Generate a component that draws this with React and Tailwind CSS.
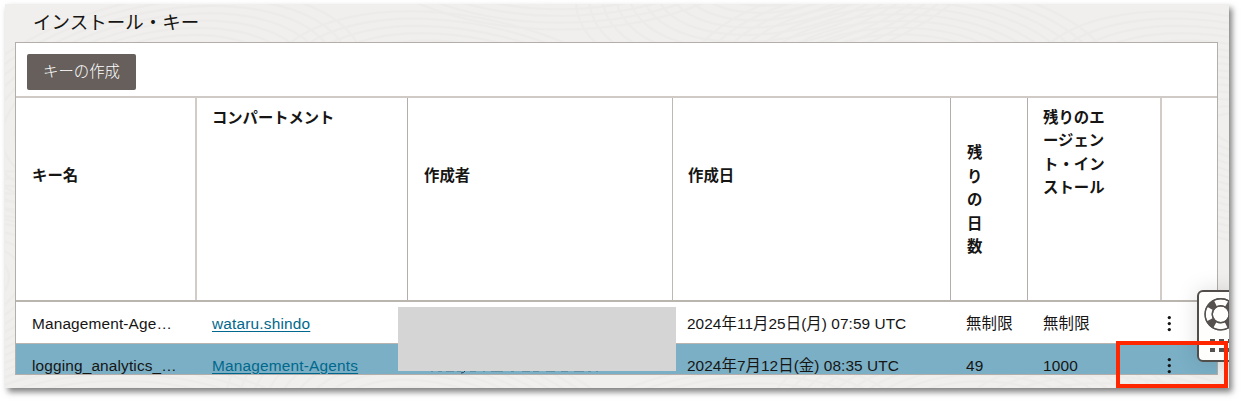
import React from "react";

const headers = [
  { text: "キー名", cell: "items-center pb-[55px] pl-[16px] border-r-2 border-[#d2cbc6]", box: "" },
  { text: "コンパートメント", cell: "items-start pl-[15px] border-r border-[#b3aeaa]", box: "text-[15.3px]" },
  { text: "作成者", cell: "items-center pb-[55px] pl-[16px] border-r border-[#beb8b4]", box: "" },
  { text: "作成日", cell: "items-center pb-[55px] pl-[15px] border-r border-[#b3aeaa]", box: "" },
  { text: "残りの日数", cell: "items-center pb-[7px] pl-[16px] border-r border-[#b3aeaa]", box: "w-[16px]" },
  { text: "残りのエージェント・インストール", cell: "items-start pl-[15px] border-r-2 border-[#d2cbc6]", box: "w-[63px] break-all" },
  { text: "", cell: "", box: "" },
];

const rows = [
  {
    name: "Management-Age…",
    compartment: "wataru.shindo",
    created: "2024年11月25日(月) 07:59 UTC",
    days: "無制限",
    installs: "無制限",
    style: "h-[42px] shrink-0 border-b border-[#b9b4b0] bg-white pt-[2px]",
  },
  {
    name: "logging_analytics_…",
    compartment: "Management-Agents",
    created: "2024年7月12日(金) 08:35 UTC",
    days: "49",
    installs: "1000",
    style: "h-[43px] shrink-0 bg-[#7aafc6]",
  },
];

const columns = "grid grid-cols-[181px_211px_265px_278px_77px_134px_55px]";

function Texture() {
  const rings = [];
  const centers = [
    [150, 110], [560, -80], [480, 130], [790, -40], [900, 90], [1240, 130],
    [-60, 290], [120, 470], [440, 440], [700, 480], [980, 430], [1160, 480],
  ];
  centers.forEach(([x, y], i) => {
    for (let r = 20; r < 150; r += 9) {
      rings.push(
        <ellipse key={`${i}-${r}`} cx={x} cy={y} rx={r * 1.5} ry={r * 0.75} transform={`rotate(${(i % 3) * 14 - 14} ${x} ${y})`} />
      );
    }
  });
  return (
    <svg className="absolute inset-0 h-full w-full" viewBox="5 4 1224 384" fill="none" stroke="#e7e6e4" strokeWidth="2.2" opacity="0.35">
      {rings}
    </svg>
  );
}

function Kebab() {
  return (
    <svg className="block h-[18px] w-[6px]" viewBox="0 0 6 18" fill="#161513">
      <circle cx="3.3" cy="2.6" r="1.65" />
      <circle cx="3.3" cy="8.6" r="1.65" />
      <circle cx="3.3" cy="14.6" r="1.65" />
    </svg>
  );
}

function HelpWidget() {
  return (
    <div className="absolute left-[1192px] top-[286px] h-[72px] w-[42px] rounded-[6px] border-2 border-[#504d4a] bg-[#fefefd] shadow-[0_0_22px_rgba(0,0,0,0.13)]">
      <svg className="block h-[68px] w-[38px]" viewBox="1199 292 38 68">
        <circle cx="1220.7" cy="314.3" r="12" fill="none" stroke="#55514e" strokeWidth="8.4" />
        <circle
          cx="1220.7"
          cy="314.3"
          r="12"
          fill="none"
          stroke="#fefefd"
          strokeWidth="6"
          strokeDasharray="11.6 7.25"
          transform="rotate(-27.7 1220.7 314.3)"
        />
        <circle cx="1220.7" cy="314.3" r="15.6" fill="none" stroke="#55514e" strokeWidth="1.4" />
        <circle cx="1220.7" cy="314.3" r="8.5" fill="none" stroke="#55514e" strokeWidth="1.4" />
        <path
          fill="#55514e"
          d="M1210 339h5v4h-5zM1219 339h5v4h-5zM1228 339h5v4h-5zM1210 348h5v4h-5zM1219 348h5v4h-5zM1228 348h5v4h-5z"
        />
      </svg>
    </div>
  );
}

export default function App() {
  return (
    <main className="h-[402px] w-[1242px] overflow-hidden bg-white pl-[5px] pt-[4px] font-['Liberation_Sans','Noto_Sans_CJK_JP',sans-serif] text-[15.4px] text-[#161513]" lang="ja">
      <div className="h-[384px] w-[1224px] shadow-[3px_4px_6px_0px_rgba(0,0,0,0.5)]">
        <section className="relative h-full w-full overflow-hidden bg-[#f0efed]">
          <Texture />
          <div className="relative flex h-full flex-col pl-[10px]">
            <h1 className="h-[38px] shrink-0 pl-[18px] font-['Noto_Sans_CJK_JP',sans-serif] text-[18.5px] font-normal leading-[35px]">
              インストール・キー
            </h1>
            <div className="flex h-[333px] w-[1203px] flex-col overflow-hidden border border-[#b3aeaa] bg-white">
              <div className="h-[55px] shrink-0 border-b-2 border-[#d0cac6] pl-[11px] pt-[11px]">
                <button className="flex h-[36px] w-[109px] items-center justify-center rounded-[2px] bg-[#665f5b] pb-[3px] font-['Noto_Sans_CJK_JP',sans-serif] font-light text-white">
                  キーの作成
                </button>
              </div>
              <div className={`${columns} h-[204px] shrink-0 border-b-2 border-[#bbb5b0]`}>
                {headers.map((h, i) => (
                  <div key={i} className={`flex pt-[7px] ${h.cell}`}>
                    <span className={`font-['Noto_Sans_CJK_JP',sans-serif] font-bold leading-[23.4px] ${h.box}`}>{h.text}</span>
                  </div>
                ))}
              </div>
              {rows.map((r) => (
                <div key={r.name} className={`${columns} items-center ${r.style}`}>
                  <span className="whitespace-nowrap pl-[16px] tracking-[0.15px]">{r.name}</span>
                  <a className="pl-[15px] tracking-[0.19px] text-[#00688c] underline underline-offset-2">{r.compartment}</a>
                  <span />
                  <span className="whitespace-nowrap pl-[14px] tracking-[0.06px]">{r.created}</span>
                  <span className="pl-[15px] tracking-[0.2px]">{r.days}</span>
                  <span className="pl-[15px] tracking-[0.2px]">{r.installs}</span>
                  <span className="pl-[4px]"><Kebab /></span>
                </div>
              ))}
            </div>
          </div>
          <svg className="absolute left-[418px] top-[367px] h-[3px] w-[200px]" viewBox="0 0 200 3" fill="none" stroke="#30404a">
            <path d="M8 .2h2m5 0h4m4 0h8m3 0h4m9 0h6m7 0h2m6 0h12m8 0h3m8 0h8m3 0h6m7 0h9m6 0h7m6 0h10m4 0h3m5 0h2" opacity=".4" />
            <path d="M42 0q-1 2-4 2" />
          </svg>
          <div className="absolute left-[393px] top-[303px] h-[64px] w-[278px] bg-[#d5d5d5]" />
          <HelpWidget />
          <div className="absolute left-[1111px] top-[337px] h-[47px] w-[112px] border-4 border-[#ff2600]" />
        </section>
      </div>
    </main>
  );
}
